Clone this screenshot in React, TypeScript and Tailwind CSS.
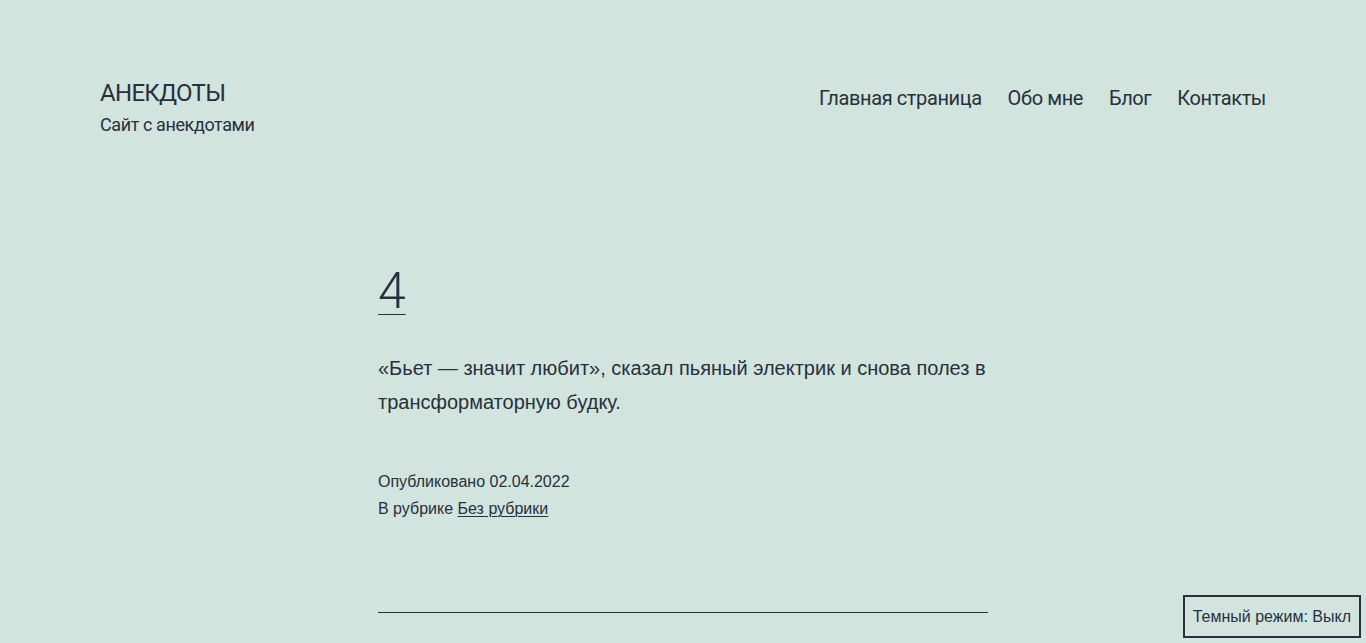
const nav = ['Главная страница', 'Обо мне', 'Блог', 'Контакты'];

const App = () => {
  return (
    <div className="min-h-[643px] bg-[#d1e4dd] text-[#28303d]">
      {/* site header */}
      <header className="flex items-start justify-between px-[100px] pt-[78px] font-['Roboto',sans-serif]">
        <div>
          <p className="text-[24px] leading-[31px] tracking-[-0.7px] uppercase">Анекдоты</p>
          <p className="mt-[3px] text-[18px] leading-[25px] tracking-[-0.4px]">Сайт с анекдотами</p>
        </div>
        <nav className="mt-[5px] flex gap-[26px] text-[20px] leading-[30px] tracking-[-0.4px]">
          {nav.map((item) => (
            <a key={item} href="#" className="whitespace-nowrap">
              {item}
            </a>
          ))}
        </nav>
      </header>

      <main className="mx-auto w-[610px] pt-[127px] pb-[30px]">
        <h1 className="font-['Roboto',sans-serif] font-light text-[50px] leading-[55px]">
          <a href="#" className="underline decoration-1 underline-offset-[6px]">
            4
          </a>
        </h1>
        <p className="mt-[32px] font-['Liberation_Sans',Arial,sans-serif] text-[20px] leading-[34px]">
          «Бьет — значит любит», сказал пьяный электрик и снова полез в трансформаторную будку.
        </p>
        <div className="mt-[49px] font-['Liberation_Sans',Arial,sans-serif] text-[16px] leading-[27px]">
          <p>Опубликовано 02.04.2022</p>
          <p>
            В рубрике{' '}
            <a href="#" className="underline decoration-1 underline-offset-[2px]">
              Без рубрики
            </a>
          </p>
        </div>
        <div className="mt-[90px] h-px bg-[#28303d]"></div>
      </main>

      <button className="fixed right-[5px] bottom-[5px] h-[43px] border-2 border-[#28303d] bg-[#d1e4dd] px-[8px] font-['Liberation_Sans',Arial,sans-serif] text-[16px] text-[#28303d]">
        Темный режим: Выкл
      </button>
    </div>
  );
};

export default App;
